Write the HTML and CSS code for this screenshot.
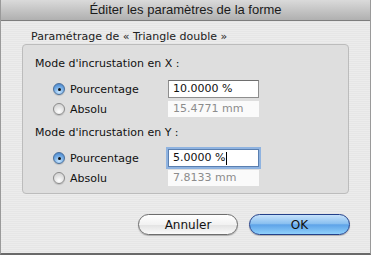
FILE: index.html
```html
<!DOCTYPE html>
<html lang="fr">
<head>
<meta charset="utf-8">
<link rel="stylesheet" href="styles.css">
</head>
<body>
<div class="window">
  <div class="titlebar">Éditer les paramètres de la forme</div>
  <div class="content">
    <div class="group-label">Paramétrage de « Triangle double »</div>
    <div class="group">
      <div class="section">
        <div class="heading">Mode d'incrustation en X :</div>
        <div class="row first">
          <span class="radio on"></span><span class="rlabel">Pourcentage</span>
          <span class="field">10.0000 %</span>
        </div>
        <div class="row">
          <span class="radio"></span><span class="rlabel">Absolu</span>
          <span class="field disabled">15.4771 mm</span>
        </div>
      </div>
      <div class="section second">
        <div class="heading">Mode d'incrustation en Y :</div>
        <div class="row first">
          <span class="radio on"></span><span class="rlabel">Pourcentage</span>
          <span class="field focus">5.0000 %<span class="caret"></span></span>
        </div>
        <div class="row">
          <span class="radio"></span><span class="rlabel">Absolu</span>
          <span class="field disabled">7.8133 mm</span>
        </div>
      </div>
    </div>
    <div class="buttons">
      <span class="btn">Annuler</span>
      <span class="btn default">OK</span>
    </div>
  </div>
</div>
</body>
</html>
```
FILE: styles.css
```css
html, body { margin: 0; padding: 0; }
body {
  width: 371px; height: 255px; overflow: hidden;
  font-family: "DejaVu Sans", "Liberation Sans", sans-serif;
  color: #111;
}
.window {
  box-sizing: border-box;
  width: 371px; height: 255px;
  background: repeating-linear-gradient(0deg, #ececec 0 1px, #e6e6e6 1px 2px);
  border-left: 1px solid #9a9a9a;
  border-right: 1px solid #9a9a9a;
  border-bottom: 2px solid #6a6a6a;
  display: flex; flex-direction: column;
}
.titlebar {
  height: 21px; box-sizing: border-box;
  background: linear-gradient(#dadada, #b0b0b0);
  border-bottom: 1px solid #7d7d7d;
  text-align: center;
  font-family: "Liberation Sans", "DejaVu Sans", sans-serif;
  font-size: 13px; line-height: 20px;
  color: #1a1a1a;
}
.content {
  display: flex; flex-direction: column;
  padding: 0 21px 0 21px;
}
.group-label {
  font-size: 11px; line-height: 13px;
  margin: 9px 0 0 9px;
  color: #222;
}
.group {
  margin-top: 1px;
  height: 150px; box-sizing: border-box;
  background: #dedede;
  border: 1px solid #bcbcbc;
  border-radius: 4px;
  padding: 12px 0 0 12px;
  display: flex; flex-direction: column;
}
.section { display: flex; flex-direction: column; }
.section.second { margin-top: 7px; }
.heading { font-size: 11px; line-height: 14px; }
.row {
  display: flex; align-items: center;
  height: 20px;
  font-size: 11px;
}
.row.first { margin-top: 8px; }
.radio {
  width: 12px; height: 12px; box-sizing: border-box;
  border-radius: 50%;
  margin-left: 18px;
  border: 1px solid #8a8a8a;
  background: radial-gradient(circle at 50% 75%, #ffffff, #d8d8d8 70%);
  box-shadow: 0 1px 1px rgba(0,0,0,0.15);
  position: relative;
}
.radio.on {
  border-color: #4a6f9a;
  background: radial-gradient(circle at 50% 80%, #c8e6ff, #6aa4e0 60%, #3d78c2);
}
.radio.on::after {
  content: ""; position: absolute;
  left: 3.5px; top: 3.5px; width: 3px; height: 3px;
  border-radius: 50%; background: #111;
}
.rlabel { margin-left: 5px; width: 98px; }
.field {
  width: 91px; height: 18px; box-sizing: border-box;
  background: #fff;
  border: 1px solid #8e8e8e;
  border-top-color: #6e6e6e;
  padding-left: 4px;
  line-height: 16px;
  font-size: 11px;
  display: flex; align-items: center;
}
.field.disabled {
  border: none; background: #fafafa;
  color: #8c8c8c;
  height: 16px;
  padding-left: 5px;
}
.field.focus {
  height: 18px;
  border: 1px solid #5a7fb0;
  box-shadow: 0 0 0 2px #8fb3e0;
}
.caret {
  display: inline-block; width: 1px; height: 13px;
  background: #000; margin-left: 1px;
}
.buttons {
  display: flex; justify-content: flex-end;
  gap: 11px;
  margin-top: 20px;
  margin-right: -1px;
}
.btn {
  width: 100px; height: 21px; box-sizing: border-box;
  border-radius: 11px;
  border: 1px solid #6d6d6d;
  background: linear-gradient(#ffffff 0%, #f2f2f2 50%, #e2e2e2 51%, #fafafa 100%);
  font-size: 12px;
  display: flex; align-items: center; justify-content: center;
  box-shadow: 0 1px 1px rgba(0,0,0,0.25);
}
.btn.default {
  width: 101px;
  border-color: #23408a;
  background: linear-gradient(#c6e2fb 0%, #8ac0f0 45%, #5ea3e8 52%, #8fd0fb 100%);
}
```
